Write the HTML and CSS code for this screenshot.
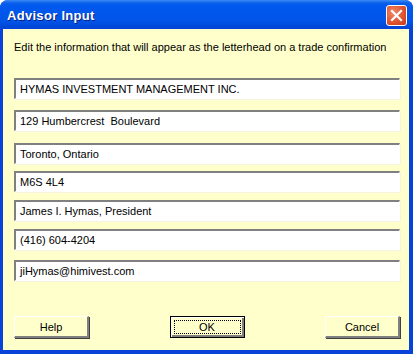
FILE: index.html
```html
<!DOCTYPE html>
<html>
<head>
<meta charset="utf-8">
<link rel="stylesheet" href="styles.css">
</head>
<body>
<div class="window">
  <div class="titlebar">
    <span class="title">Advisor Input</span>
    <span class="close">
      <svg width="19" height="19" viewBox="0 0 19 19">
        <path d="M5 5 L14 14 M14 5 L5 14" stroke="#fff" stroke-width="2.2" stroke-linecap="square"/>
      </svg>
    </span>
  </div>
  <div class="client">
    <p class="intro">Edit the information that will appear as the letterhead on a trade confirmation</p>
    <div class="fields">
      <div class="field f1">HYMAS INVESTMENT MANAGEMENT INC.</div>
      <div class="field f2">129 Humbercrest&nbsp; Boulevard</div>
      <div class="field f3">Toronto, Ontario</div>
      <div class="field f4">M6S 4L4</div>
      <div class="field f5">James I. Hymas, President</div>
      <div class="field f6">(416) 604-4204</div>
      <div class="field f7">jiHymas@himivest.com</div>
    </div>
    <div class="buttons">
      <button class="btn">Help</button>
      <button class="btn default"><span class="focus">OK</span></button>
      <button class="btn">Cancel</button>
    </div>
  </div>
</div>
</body>
</html>
```
FILE: styles.css
```css
html, body {
  margin: 0;
  padding: 0;
  background: #fff;
}
.window {
  width: 413px;
  height: 354px;
  box-sizing: border-box;
  background: #0842d8;
  border-radius: 8px 8px 0 0;
  padding: 0 4px 4px 3px;
  display: flex;
  flex-direction: column;
  font-family: "Liberation Sans", Arial, sans-serif;
}
.titlebar {
  height: 29px;
  margin: 0 -4px 0 -3px;
  padding: 0 7px 0 7px;
  border-radius: 8px 8px 0 0;
  background: linear-gradient(#3d8bf7 0px, #0a5fe8 3px, #0058ee 6px, #0157eb 14px, #0053e6 22px, #0049d8 26px, #0842d8 29px);
  display: flex;
  align-items: center;
  justify-content: space-between;
}
.title {
  color: #fff;
  font-family: "Liberation Sans", Arial, sans-serif;
  font-weight: bold;
  font-size: 13px;
  text-shadow: 1px 1px 0 #0a1e80;
  letter-spacing: 0.3px;
  margin-top: 1px;
}
.close {
  width: 21px;
  height: 21px;
  box-sizing: border-box;
  border: 1px solid #fff;
  border-radius: 3px;
  background: radial-gradient(circle at 35% 35%, #f08a6e 0%, #e0542f 55%, #c4381c 100%);
  display: flex;
  margin-right: -1px;
  margin-top: 1px;
}
.close svg {
  width: 19px;
  height: 19px;
}
.client {
  flex: 1;
  background: #ffffcc;
  padding: 0 9px 0 11px;
  display: flex;
  flex-direction: column;
}
.intro {
  margin: 12px 0 0 0;
  font-size: 11px;
  color: #000;
  height: 13px;
  line-height: 13px;
  white-space: nowrap;
}
.fields {
  display: flex;
  flex-direction: column;
}
.field {
  height: 21px;
  box-sizing: border-box;
  background: #fff;
  border-top: 2px solid #808080;
  border-left: 2px solid #808080;
  border-bottom: 1px solid #fff;
  border-right: 1px solid #fff;
  box-shadow: 1px 1px 0 #f4f4e0;
  padding: 0 0 0 4px;
  font-size: 11px;
  line-height: 18px;
  color: #000;
  white-space: nowrap;
}
.f1 { margin-top: 24px; }
.f2 { margin-top: 11px; }
.f3 { margin-top: 12px; }
.f4 { margin-top: 7px; }
.f5 { margin-top: 8px; }
.f6 { margin-top: 8px; }
.f7 { margin-top: 10px; }
.buttons {
  margin-top: 35px;
  display: flex;
  justify-content: space-between;
}
.btn {
  width: 75px;
  height: 22px;
  box-sizing: border-box;
  background: #ffffcc;
  border: none;
  border-top: 1px solid #fff;
  border-left: 1px solid #fff;
  border-right: 2px solid #808080;
  border-bottom: 2px solid #808080;
  box-shadow: 1px 1px 0 #404040;
  font-family: "Liberation Sans", Arial, sans-serif;
  font-size: 11px;
  color: #000;
  padding: 0;
  margin: 0;
}
.btn.default {
  border: 1px solid #000;
  box-shadow: inset 1px 1px 0 #fff, inset -2px -2px 0 #808080;
  padding: 3px;
  display: flex;
}
.focus {
  flex: 1;
  border: 1px dotted #000;
  display: flex;
  align-items: center;
  justify-content: center;
}
```
